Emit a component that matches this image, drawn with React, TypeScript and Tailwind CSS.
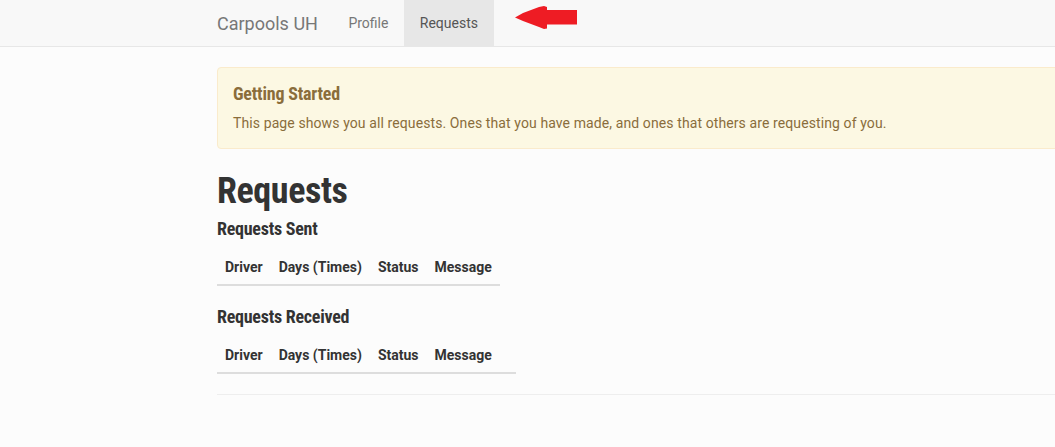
import React from "react";

const cond = { fontFamily: '"Roboto Condensed", "Liberation Sans Narrow", Roboto, sans-serif' };

function HeaderTable({ extra }: { extra?: boolean }) {
  return (
    <table className="w-auto border-collapse whitespace-nowrap text-[14px] text-[#333]">
      <thead>
        <tr className="border-b-2 border-[#dddddd]">
          <th className="px-2 pb-[7px] pt-[9px] text-left font-bold leading-[20px]">Driver</th>
          <th className="px-2 pb-[7px] pt-[9px] text-left font-bold leading-[20px]">Days (Times)</th>
          <th className="px-2 pb-[7px] pt-[9px] text-left font-bold leading-[20px]">Status</th>
          <th className="px-2 pb-[7px] pt-[9px] text-left font-bold leading-[20px]">Message</th>
          {extra && <th className="w-[16px] p-0"></th>}
        </tr>
      </thead>
      <tbody></tbody>
    </table>
  );
}

export default function App() {
  return (
    <div className="min-h-[447px] w-[1055px] overflow-hidden bg-[#fcfcfc]" style={{ fontFamily: "Roboto, sans-serif" }}>
      <nav className="h-[47px] border-b border-[#e7e7e7] bg-[#f8f8f8]">
        <div className="flex h-[46px] items-stretch pl-[217px]">
          <span className="flex items-center pr-[15px] text-[18px] text-[#777]">Carpools UH</span>
          <a className="flex w-[71px] items-center justify-center text-[14px] text-[#777]">Profile</a>
          <a className="flex w-[90px] items-center justify-center bg-[#e7e7e7] text-[14px] text-[#555]">Requests</a>
          <div className="ml-[21px] pt-[6px]">
            <svg width="63" height="23" viewBox="0 0 63 23" className="block">
              <path d="M0 11.5 L8 7 L16 4 L24 1 L29 0 L32 1 L32 4 L62 4 L62 18.5 L32 18.5 L32 22.5 L29 23 L24 21 L16 18 L8 15 Z" fill="#ee1c24" />
            </svg>
          </div>
        </div>
      </nav>
      <div className="pl-[217px]">
        <div className="mt-[20px] w-[900px] rounded-[4px] border border-[#faebcc] bg-[#fcf8e3] px-[15px] pb-[15px] pt-[15px] text-[#8a6d3b]">
          <h4 className="text-[18px] font-bold leading-[22px] tracking-[-0.2px]" style={cond}>Getting Started</h4>
          <p className="mt-[8px] text-[14px] leading-[20px] tracking-[0.1px]">
            This page shows you all requests. Ones that you have made, and ones that others are requesting of you.
          </p>
        </div>
        <h1 className="mt-[22px] text-[36px] font-bold leading-[40px] tracking-[-0.4px] text-[#333]" style={cond}>Requests</h1>
        <h4 className="mt-[7px] text-[18px] font-bold leading-[22px] tracking-[-0.25px] text-[#333]" style={cond}>Requests Sent</h4>
        <div className="mt-[8px]">
          <HeaderTable />
        </div>
        <h4 className="mt-[20px] text-[18px] font-bold leading-[22px] tracking-[-0.25px] text-[#333]" style={cond}>Requests Received</h4>
        <div className="mt-[8px]">
          <HeaderTable extra />
        </div>
        <hr className="mt-[20px] w-[900px] border-t border-[#eeeeee]" />
      </div>
    </div>
  );
}
